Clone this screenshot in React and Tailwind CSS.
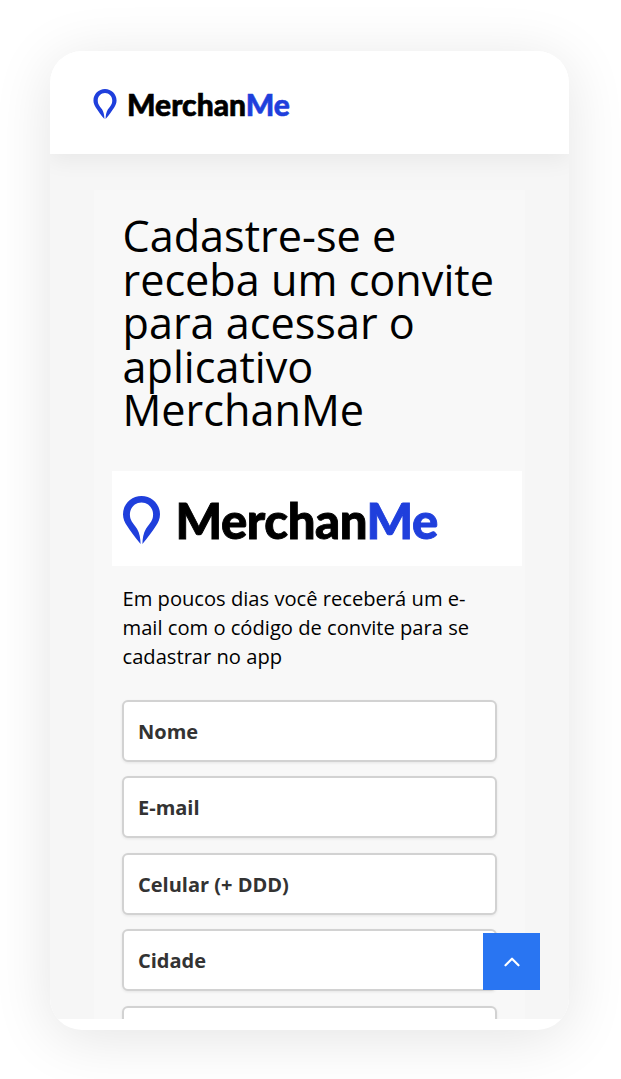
import { ChevronUp } from "lucide-react";

const FIELDS = ["Nome", "E-mail", "Celular (+ DDD)", "Cidade", ""];

const Pin = ({ className }) => (
  <svg viewBox="0 0 37 48" className={className}>
    <path
      fill="#1f3fdc"
      fillRule="evenodd"
      d="M18.5 0C8.3 0 0 8.1 0 18.2c0 4.5 1.7 8 4 11.6 3.4 5.2 8.3 12.2 13.6 18.2-.2-5.5-.9-10.6-3.6-15.2-1.7-2.9-5.4-6.6-6.4-9.8-.4-1.3-.7-3-.7-4.6C6.9 11.800 12 6.500 18.500 6.500s11.600 5.300 11.600 11.900c0 1.600-.3 3.300-.7 4.600-1 3.200-4.700 6.900-6.400 9.800-2.700 4.600-3.400 9.700-3.600 15.200 5.300-6 10.200-13 13.600-18.200 2.300-3.600 4-7.100 4-11.600C37 8.100 28.700 0 18.500 0Z"
    />
  </svg>
);

const Logo = ({ pinClass, textClass, gap }) => (
  <div className={`flex items-center ${gap}`}>
    <Pin className={pinClass} />
    <span className={`font-['Lato',sans-serif] font-black leading-none text-black ${textClass}`}>
      Merchan<span className="text-[#1f3fdc]">Me</span>
    </span>
  </div>
);

export default function App() {
  return (
    <div className="h-[1079px] w-[621px] overflow-hidden bg-white pl-[50px] pt-[51px] font-['Open_Sans',sans-serif]">
      <div className="relative h-[979px] w-[519px] overflow-hidden rounded-[32px] bg-white shadow-[0_8px_60px_rgba(0,0,0,0.11)]">
        {/* Cabecera */}
        <header className="relative z-10 flex h-[103px] items-center bg-white pl-[43px] pt-[2px] shadow-[0_6px_22px_rgba(0,0,0,0.06)]">
          <Logo
            pinClass="h-[30px] w-[24px]"
            textClass="text-[30px] tracking-[0px] [-webkit-text-stroke:0.6px_currentColor]"
            gap="gap-[10px]"
          />
        </header>

        <main className="h-[865px] overflow-hidden bg-[#f6f6f6] pl-[44px] pt-[36px]">
          <div className="h-[829px] w-[431px] overflow-hidden bg-[#f8f8f8] pl-[28.500px] pt-[24px]">
            <h1 className="w-[400px] text-[43.200px] leading-[43.500px] text-black">
              Cadastre-se e receba um convite para acessar o aplicativo MerchanMe
            </h1>

            <div className="-ml-[10.500px] mt-[39px] flex h-[95px] w-[410px] items-center bg-white pl-[10.500px] pt-[4px]">
              <Logo
                pinClass="h-[48px] w-[37px]"
                textClass="text-[49px] tracking-[-0.4px] [-webkit-text-stroke:0.9px_currentColor]"
                gap="gap-[16px]"
              />
            </div>

            <p className="mt-[18px] w-[360px] text-[20.150px] leading-[29px] text-black">
              Em poucos dias você receberá um e-mail com o código de convite para se cadastrar no app
            </p>

            <form className="-ml-[0.500px] mt-[29px] flex w-[375px] flex-col gap-[14.500px]">
              {FIELDS.map((field, idx) => (
                <div
                  key={idx}
                  className="flex h-[62px] shrink-0 items-center rounded-[6px] border-2 border-[#d2d2d2] bg-white pl-[14px] pt-[2px] text-[20px] font-bold text-[#333333] shadow-[0_1px_3px_rgba(0,0,0,0.08)]"
                >
                  {field}
                </div>
              ))}
            </form>
          </div>
        </main>

        <button className="absolute left-[433px] top-[882px] z-20 flex h-[57px] w-[57px] items-center justify-center bg-[#2975f2] text-white">
          <ChevronUp size={26} strokeWidth={2} />
        </button>
      </div>
    </div>
  );
}
